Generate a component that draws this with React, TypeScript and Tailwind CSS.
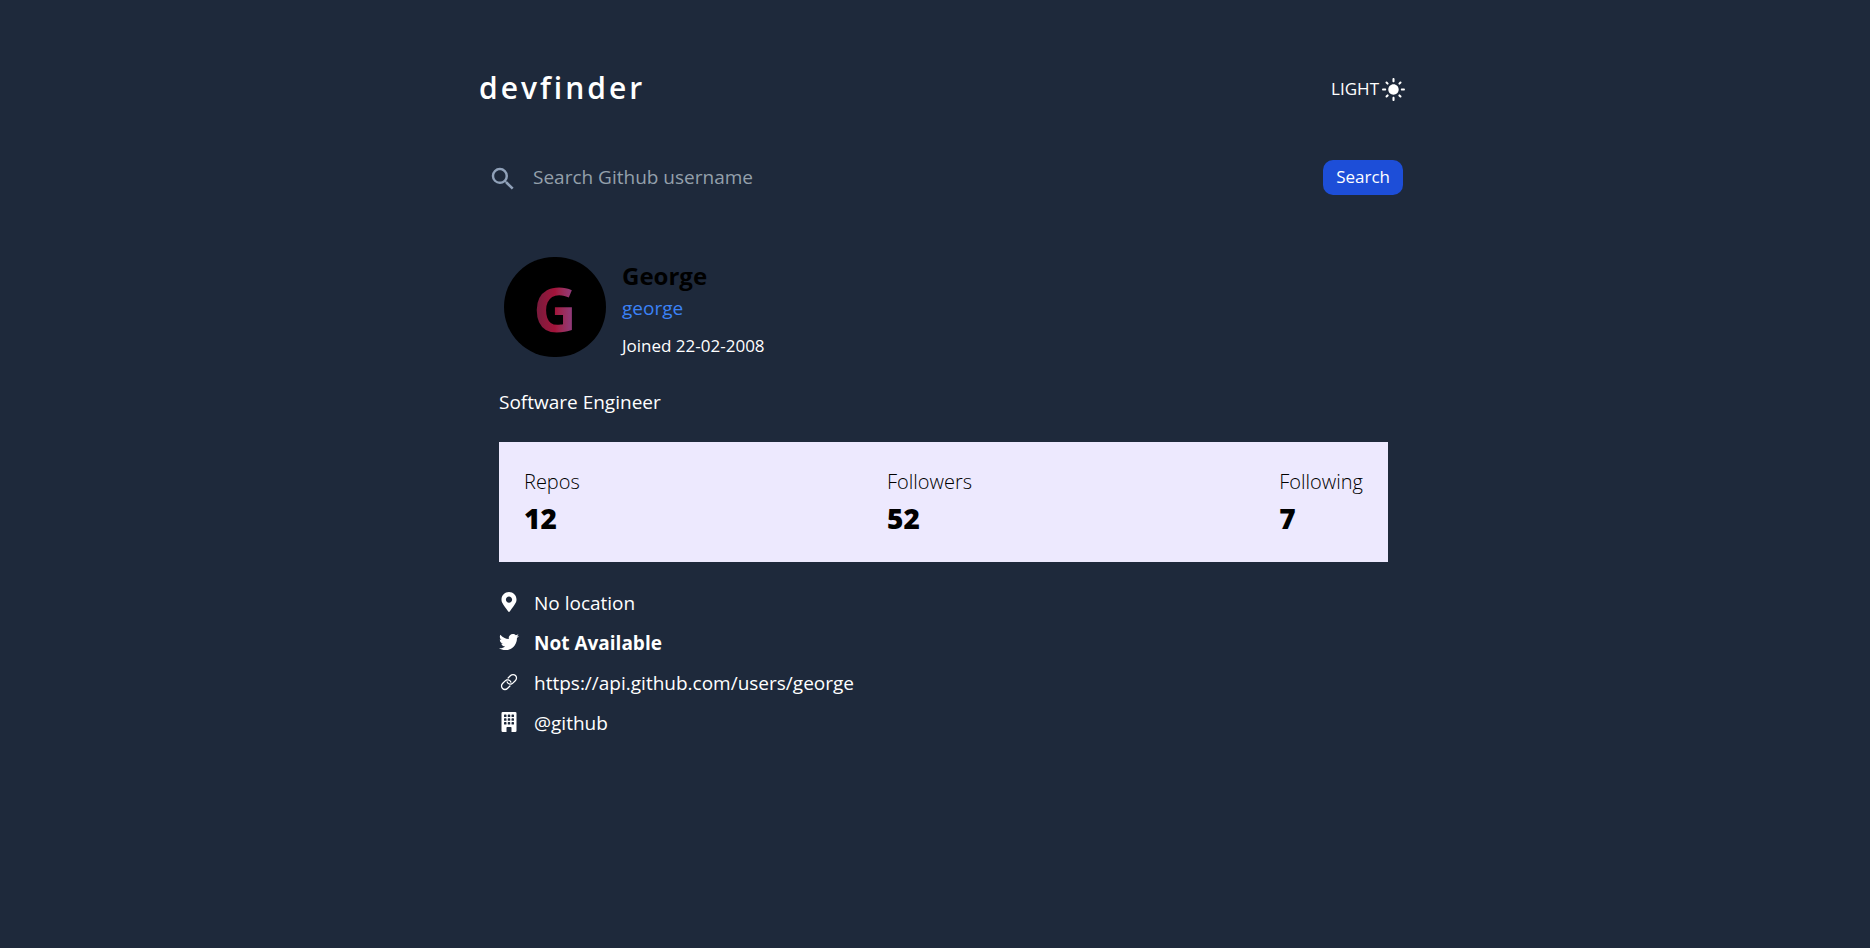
import { useState } from "react";
import type { FormEvent, ReactNode } from "react";
import { MdSearch, MdLightMode } from "react-icons/md";
import { FaMapMarkerAlt, FaTwitter } from "react-icons/fa";
import { IoIosLink } from "react-icons/io";
import { BsBuildingFill } from "react-icons/bs";

const stats = [
  { label: "Repos", value: 12 },
  { label: "Followers", value: 52 },
  { label: "Following", value: 7 },
];

function Detail({ icon, children }: { icon: ReactNode; children: ReactNode }) {
  return (
    <li className="flex h-10 items-center gap-[15px]">
      <span className="text-xl" aria-hidden="true">{icon}</span>
      <span className="pt-0.5">{children}</span>
    </li>
  );
}

export default function App() {
  const [query, setQuery] = useState("");
  const onSubmit = (event: FormEvent) => event.preventDefault();

  return (
    <div className="min-h-screen bg-[#1e293b] font-['Segoe_UI','Open_Sans','Noto_Sans',sans-serif] text-white">
      <div className="mx-auto max-w-[944px] pt-16 pl-4">
        <header className="flex h-[50px] items-center justify-between pr-px">
          <h1 className="pb-0.5 text-[30px] leading-10 font-semibold tracking-widest">devfinder</h1>
          <button type="button" className="flex items-center gap-0.5 text-[17px]">
            LIGHT
            <MdLightMode className="size-[25px]" aria-hidden="true" />
          </button>
        </header>

        <form onSubmit={onSubmit} className="mt-7 flex h-[70px] items-center pr-1 pl-[9px]">
          <label htmlFor="username" className="pt-1 text-[30px] text-slate-400">
            <MdSearch aria-hidden="true" />
          </label>
          <input
            id="username"
            type="text"
            aria-label="Github username"
            value={query}
            onChange={(event) => setQuery(event.target.value)}
            placeholder="Search Github username"
            className="ml-[15px] min-w-0 flex-1 bg-transparent text-[19px] outline-none placeholder:text-[#94a0ab]"
          />
          <button type="submit" className="h-[35px] rounded-[10px] bg-[#1d4ed8] px-[13px] text-[17px]">
            Search
          </button>
        </form>

        <main className="mt-10 pr-[19px] pl-5">
          <section className="flex items-start gap-4 pl-[5px]">
            <div className="mt-[5px] flex h-[100px] w-[102px] items-center justify-center rounded-full bg-black pt-1">
              <span className="bg-linear-to-r from-[#701a3c] via-[#a3133a] to-[#8b3f8c] bg-clip-text text-[60px] leading-none font-bold text-transparent">
                G
              </span>
            </div>
            <div className="pt-2">
              <h2 className="text-[24px] leading-8 font-bold text-black">George</h2>
              <a href="https://github.com/george" className="block text-[19px] leading-8 text-[#3b82f6]">
                george
              </a>
              <p className="mt-1.5 text-[17px] leading-8">Joined 22-02-2008</p>
            </div>
          </section>

          <p className="mt-6 text-[19px] leading-8">Software Engineer</p>

          <dl className="mt-6 flex h-[120px] items-center justify-between bg-[#ede9fe] px-[25px] text-black">
            {stats.map((stat) => (
              <div key={stat.label}>
                <dt className="text-[20px] leading-8 font-light">{stat.label}</dt>
                <dd className="text-[28px] leading-10 font-extrabold">{stat.value}</dd>
              </div>
            ))}
          </dl>

          <ul className="mt-5 text-[19px]">
            <Detail icon={<FaMapMarkerAlt />}>No location</Detail>
            <Detail icon={<FaTwitter />}>
              <strong className="font-bold">Not Available</strong>
            </Detail>
            <Detail icon={<IoIosLink />}>
              <a href="https://api.github.com/users/george">https://api.github.com/users/george</a>
            </Detail>
            <Detail icon={<BsBuildingFill />}>@github</Detail>
          </ul>
        </main>
      </div>
    </div>
  );
}
